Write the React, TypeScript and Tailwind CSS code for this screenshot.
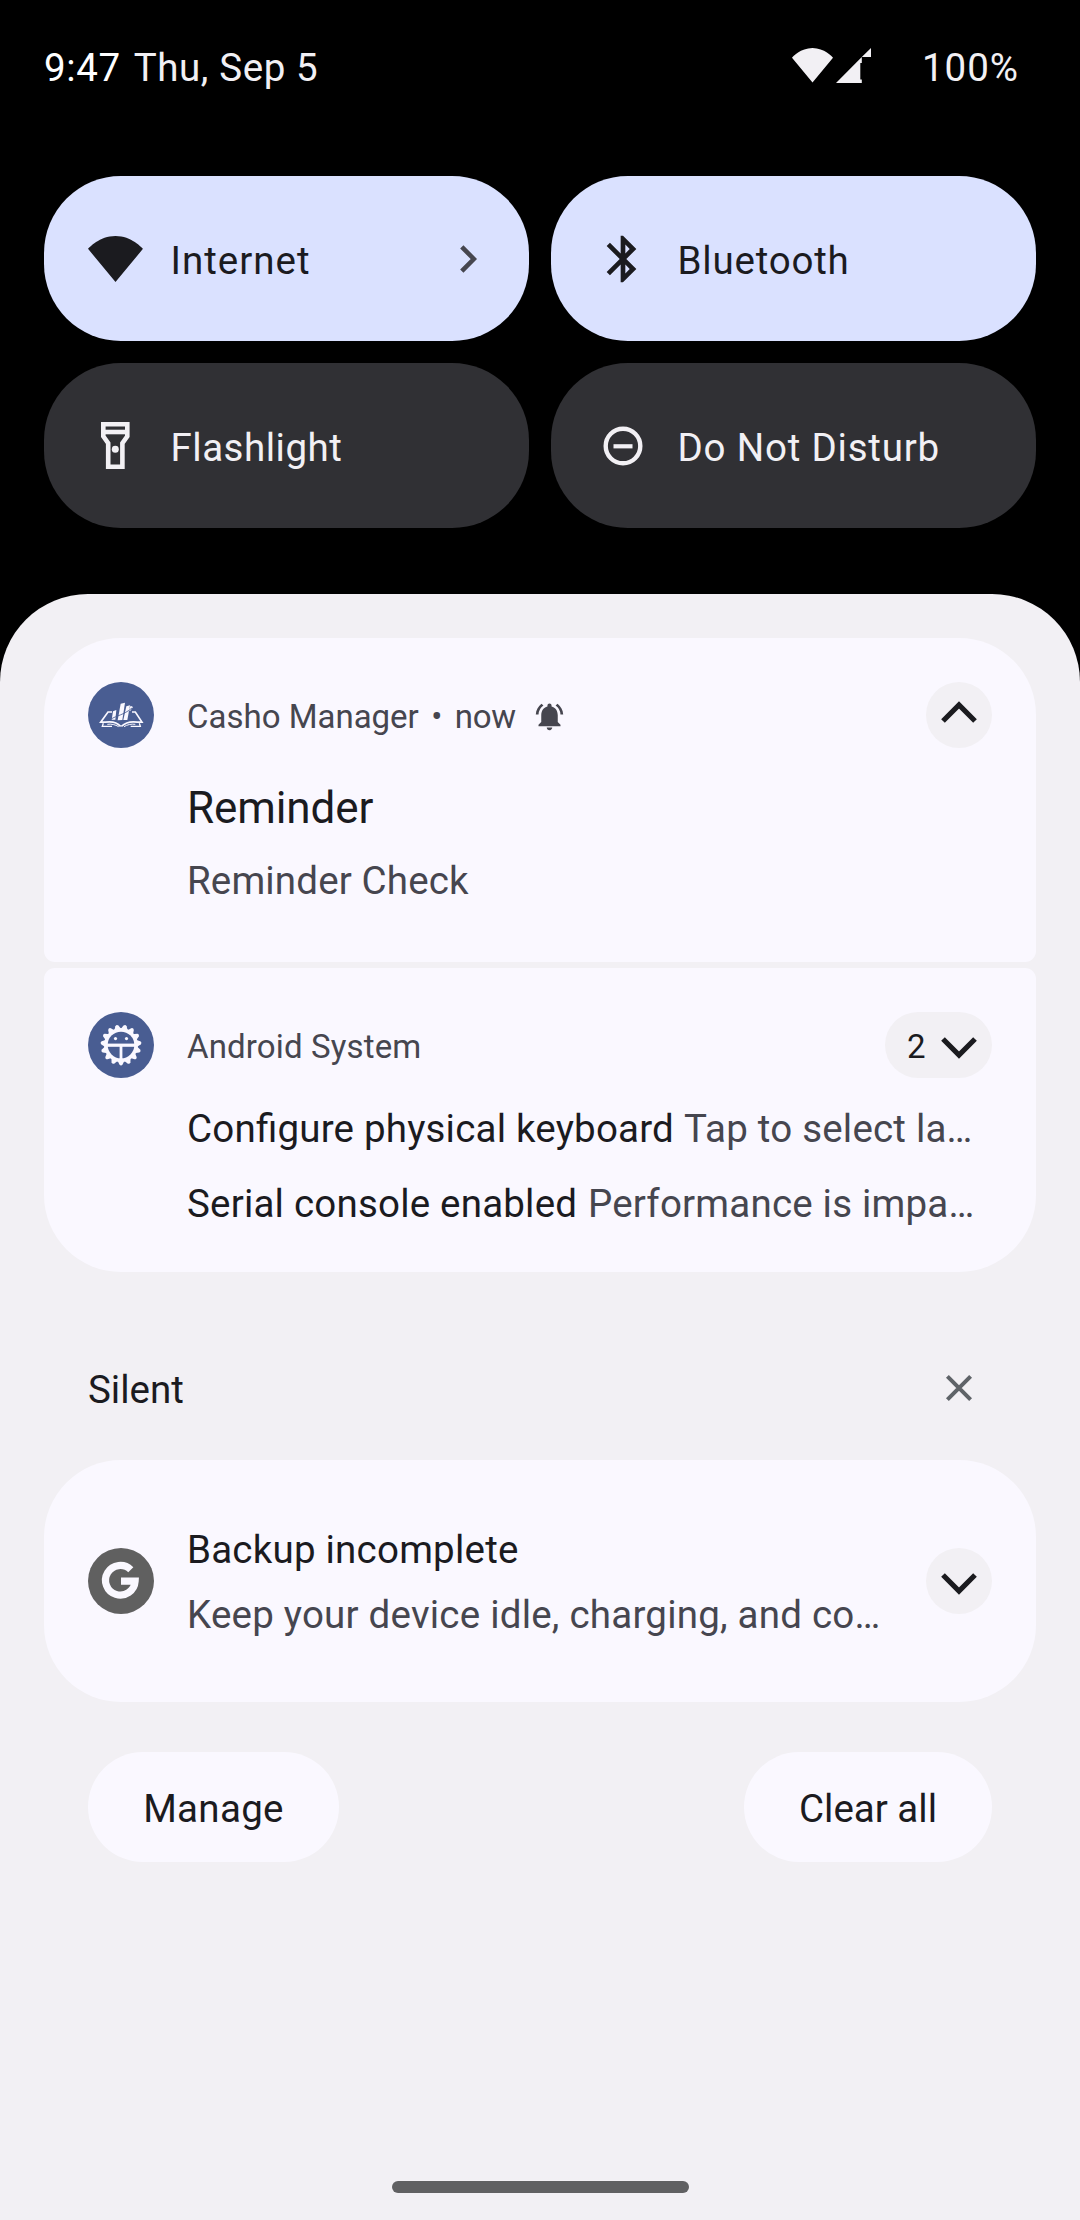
import React, { ReactNode } from "react";
import { MdBluetooth, MdNotificationsActive } from "react-icons/md";

function WifiIcon({ className }: { className: string }) {
  return (
    <svg viewBox="0 0 55 46" className={className} fill="currentColor">
      <path d="M27.5 46 0 12.8C1 11.8 11.5 0 27.5 0S54 11.8 55 12.8z" />
    </svg>
  );
}

function SignalIcon() {
  return (
    <svg viewBox="0 0 35 35" className="ml-[3px] size-[35px]" fill="currentColor">
      <path d="M0 35 25.8 9V15H24.3V31.5H25.8V35zM25.8 9 35 0V9z" />
    </svg>
  );
}

function FlashlightIcon() {
  return (
    <svg viewBox="0 0 28.6 47" className="h-[47px] w-[28.6px]" fill="none" stroke="currentColor" strokeWidth="4.6">
      <path d="M2.3 2.3H26.3V14.2L21.4 21.2V44.7H7.2V21.2L2.3 14.2z" />
      <path d="M2.3 10H26.3" />
      <circle cx="14.3" cy="27.2" r="3.5" fill="currentColor" stroke="none" />
    </svg>
  );
}

function DndIcon() {
  return (
    <svg viewBox="0 0 40 40" className="size-10" fill="none" stroke="currentColor" strokeWidth="4.4">
      <circle cx="20" cy="20" r="17.3" />
      <path d="M10.5 20.3H29.5" strokeWidth="4.2" />
    </svg>
  );
}

function Chevron({ up = false }: { up?: boolean }) {
  return (
    <svg viewBox="0 0 66 66" className="size-[66px] shrink-0" fill="none" stroke="#1b1b1f" strokeWidth="5.2">
      <path d={up ? "M17 39 33 23 49 39" : "M17 27 33 43 49 27"} />
    </svg>
  );
}

function BookIcon() {
  return (
    <svg viewBox="54 36 198 198" className="size-[66px] shrink-0">
      <circle cx="153" cy="135" r="99" fill="#495d92" />
      <g fill="none" stroke="#faf8ff" strokeWidth="5">
        <path d="M126 126H114L92 156.5H106C128 153 143 159 152 169" />
        <path d="M186 126H196L216 156.5H202C180 153 165 159 154 169" />
        <path d="M100 160 97 169H126" strokeWidth="4" />
        <path d="M208 160 211 169H182" strokeWidth="4" />
        <path d="M112 163C124 161 136 164 146 170" strokeWidth="3" />
        <path d="M196 163C184 161 172 164 162 170" strokeWidth="3" />
      </g>
      <g fill="#faf8ff">
        <path d="M129 124 139 120 136 149 125 149z" />
        <path d="M152 101 165 98 157 150 143 151z" />
        <path d="M169 109 180 106 172 150 160 150z" />
        <path d="M182 107 189 111 180 124 176 120z" />
      </g>
      <path d="M122 148C140 136 160 136 186 114" fill="none" stroke="#495d92" strokeWidth="2.5" />
    </svg>
  );
}

const GEAR_TEETH = Array.from({ length: 15 }, (_, i) => i * 24 + 180);

function SystemIcon() {
  return (
    <svg viewBox="0 0 66 66" className="size-[66px] shrink-0">
      <circle cx="33" cy="33" r="33" fill="#495d92" />
      <g fill="#faf8ff">
        {GEAR_TEETH.map((angle) => (
          <path
            key={angle}
            d="M29.2 18 31.4 13.4Q33 11.6 34.6 13.4L36.8 18z"
            transform={`rotate(${angle} 33 33)`}
          />
        ))}
        <circle cx="33" cy="33" r="17" />
      </g>
      <circle cx="33" cy="33" r="13.3" fill="#495d92" />
      <g fill="#faf8ff">
        <rect x="18" y="31.6" width="30" height="3.2" />
        <rect x="31.6" y="34" width="2.8" height="14" />
        <circle cx="27.5" cy="26.6" r="1.6" />
        <circle cx="38.5" cy="26.6" r="1.6" />
      </g>
    </svg>
  );
}

function GoogleIcon() {
  return (
    <svg viewBox="0 0 66 66" className="size-[66px] shrink-0">
      <circle cx="33" cy="33" r="33" fill="#606060" />
      <path d="M42.8 21.8A14.8 14.8 0 1 0 47.1 33.2H33" fill="none" stroke="#faf8ff" strokeWidth="7.2" />
    </svg>
  );
}

type TileProps = { icon: ReactNode; label: string; spacing?: string; active?: boolean; more?: boolean };

function Tile({ icon, label, spacing = "tracking-[0.8px]", active = false, more = false }: TileProps) {
  return (
    <div
      className={`flex h-[165px] items-center rounded-[77px] px-11 ${
        active ? "bg-[#dae1ff] text-[#1b1b1f]" : "bg-[#303034] text-[#f2f0f4]"
      }`}
    >
      <div className="mr-[27.5px] flex w-[55px] justify-center">{icon}</div>
      <div className={`grow pt-1 text-[38.5px] leading-[45px] ${spacing}`}>{label}</div>
      {more && (
        <svg viewBox="0 0 17 28" className="mr-2 h-7 w-[17px]" fill="none" stroke="#46464f" strokeWidth="4.6">
          <path d="M1.8 1.8 13.8 14 1.8 26.2" />
        </svg>
      )}
    </div>
  );
}

function Line({ title, text }: { title: string; text: string }) {
  return (
    <div className="text-[38.5px] leading-[45px] tracking-[0.2px] whitespace-nowrap text-[#46464f] [font-feature-settings:'liga'_1]">
      <span className="mr-px text-[#1b1b1f]">{title}</span> {text}
    </div>
  );
}

export default function App() {
  return (
    <div className="flex h-[2220px] w-[1080px] flex-col overflow-hidden bg-black font-['Roboto',sans-serif]">
      <header className="flex h-[176px] items-start pt-[45px] pr-[61px] pl-11 text-[38.5px] leading-[45px] text-[#f2f0f4]">
        <span className="tracking-[0.6px] text-white">9:47</span>
        <span className="ml-[13px] tracking-[0.6px]">Thu, Sep 5</span>
        <div className="mt-[3px] ml-auto flex items-start">
          <WifiIcon className="h-[34.5px] w-[41px]" />
          <SignalIcon />
        </div>
        <span className="ml-[51px] tracking-[1px]">100%</span>
      </header>

      <section className="grid grid-cols-2 gap-[22px] px-11">
        <Tile active more label="Internet" spacing="tracking-[1px]" icon={<WifiIcon className="h-[46px] w-[55px]" />} />
        <Tile active label="Bluetooth" icon={<MdBluetooth className="size-[56px] shrink-0" />} />
        <Tile label="Flashlight" spacing="tracking-[0.5px]" icon={<FlashlightIcon />} />
        <Tile label="Do Not Disturb" icon={<DndIcon />} />
      </section>

      <main className="mt-[66px] flex grow flex-col rounded-t-[88px] bg-[#f2f0f4] px-11 pt-11">
        <article className="h-[324px] rounded-t-[77px] rounded-b-[11px] bg-[#faf8ff] p-11">
          <div className="flex h-[66px] items-center">
            <BookIcon />
            <div className="ml-[33px] flex grow items-center pt-[3px] text-[33px] leading-[39px] text-[#46464f]">
              <span>Casho Manager</span>
              <span className="w-9 text-center">•</span>
              <span className="tracking-[-0.3px]">now</span>
              <MdNotificationsActive className="ml-[17px] size-[33px]" />
            </div>
            <div className="rounded-full bg-[#f2f0f4]">
              <Chevron up />
            </div>
          </div>
          <h2 className="mt-[34px] ml-[99px] text-[44px] leading-[52px] tracking-[-0.1px] text-[#1b1b1f]">Reminder</h2>
          <p className="mt-6 ml-[99px] text-[38.5px] leading-[45px] tracking-[0.15px] text-[#46464f]">Reminder Check</p>
        </article>

        <article className="mt-1.5 h-[304px] rounded-t-[11px] rounded-b-[77px] bg-[#faf8ff] p-11">
          <div className="flex h-[66px] items-center">
            <SystemIcon />
            <div className="ml-[33px] grow pt-[3px] text-[33px] leading-[39px] tracking-[0.15px] text-[#46464f]">Android System</div>
            <div className="flex h-[66px] w-[107px] items-center justify-between rounded-full bg-[#f2f0f4] pl-[22px]">
              <span className="w-[19px] pt-[3px] text-[33px] leading-[39px] text-[#1b1b1f]">2</span>
              <Chevron />
            </div>
          </div>
          <div className="mt-7 ml-[99px] flex flex-col gap-[30px]">
            <Line title="Configure physical keyboard" text="Tap to select la…" />
            <Line title="Serial console enabled" text="Performance is impa…" />
          </div>
        </article>

        <div className="mt-[83px] flex h-[66px] items-center justify-between px-11">
          <h3 className="pt-[3px] text-[38.5px] leading-[45px] text-[#1b1b1f]">Silent</h3>
          <svg viewBox="0 0 66 66" className="size-[66px]" fill="none" stroke="#5f6368" strokeWidth="4">
            <path d="M21.4 21.4 44.6 44.6M44.6 21.4 21.4 44.6" />
          </svg>
        </div>

        <article className="mt-[39px] flex h-[242px] items-center rounded-[77px] bg-[#faf8ff] px-11">
          <GoogleIcon />
          <div className="ml-[33px] flex grow flex-col gap-5 pt-0.5 text-[38.5px] leading-[45px] tracking-[0.22px] whitespace-nowrap text-[#46464f]">
            <div className="text-[#1b1b1f]">Backup incomplete</div>
            <div>Keep your device idle, charging, and co…</div>
          </div>
          <div className="rounded-full bg-[#f2f0f4]">
            <Chevron />
          </div>
        </article>

        <div className="mt-[50px] flex justify-between px-11 text-[38.5px] leading-[45px] text-[#1b1b1f]">
          <button className="h-[110px] w-[251px] rounded-full bg-[#faf8ff] pt-[3px] tracking-[0.3px]">Manage</button>
          <button className="h-[110px] w-[248px] rounded-full bg-[#faf8ff] pt-[3px]">Clear all</button>
        </div>

        <div className="mt-auto mb-[27px] h-[12px] w-[297px] self-center rounded-full bg-[#606062]" />
      </main>
    </div>
  );
}
